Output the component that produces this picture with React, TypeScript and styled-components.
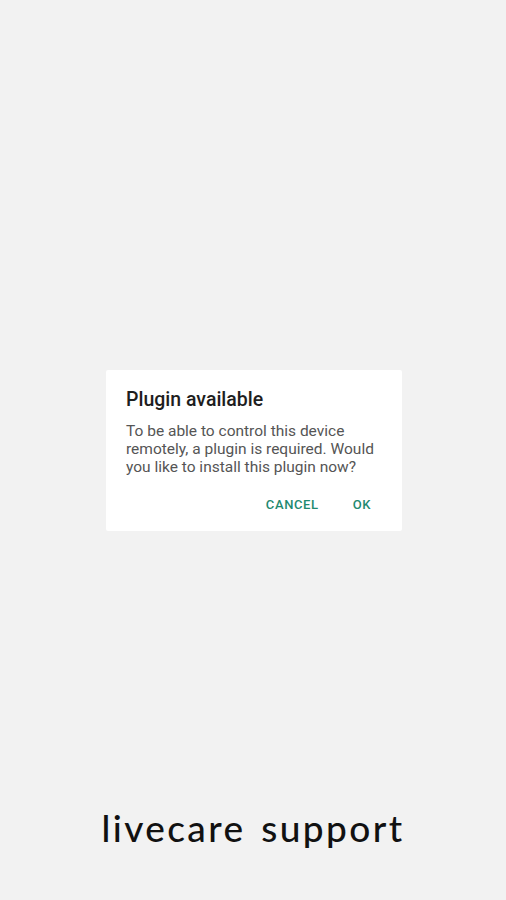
import React from "react";
import styled, { createGlobalStyle } from "styled-components";

const Global = createGlobalStyle`
  html, body { margin: 0; padding: 0; background: #f2f2f2; }
  * { box-sizing: border-box; }
`;

const Screen = styled.div`
  width: 506px;
  height: 900px;
  background: #f2f2f2;
  display: flex;
  flex-direction: column;
  align-items: center;
  font-family: Roboto, "Liberation Sans", sans-serif;
`;

const Center = styled.div`
  padding-top: 370px;
  padding-left: 2px;
  display: flex;
  justify-content: center;
  width: 100%;
`;

const Dialog = styled.div`
  width: 296px;
  height: 161px;
  background: #ffffff;
  border-radius: 2px;
  padding: 18px 18px 0 20px;
  display: flex;
  flex-direction: column;
`;

const Title = styled.div`
  font-size: 19.5px;
  font-weight: 500;
  color: #1e1e1e;
  line-height: 24px;
`;

const Body = styled.div`
  margin-top: 10px;
  font-size: 15.5px;
  line-height: 18px;
  color: #555555;
`;

const Actions = styled.div`
  display: flex;
  justify-content: flex-end;
  gap: 34px;
  margin-top: 21px;
  padding-right: 13px;
`;

const Action = styled.span`
  font-size: 13px;
  font-weight: 500;
  color: #1f8a70;
  letter-spacing: 0.6px;
`;

const Spacer = styled.div`
  flex: 1;
`;

const Brand = styled.div`
  font-family: Lato, "Open Sans", sans-serif;
  font-size: 37px;
  font-weight: 500;
  color: #111;
  letter-spacing: 2.4px;
  word-spacing: 4px;
  margin-bottom: 50px;
`;

export default function App() {
  return (
    <Screen>
      <Global />
      <Center>
        <Dialog>
          <Title>Plugin available</Title>
          <Body>
            To be able to control this device remotely, a plugin is required. Would you like to install this plugin now?
          </Body>
          <Actions>
            <Action>CANCEL</Action>
            <Action>OK</Action>
          </Actions>
        </Dialog>
      </Center>
      <Spacer />
      <Brand>livecare support</Brand>
    </Screen>
  );
}
